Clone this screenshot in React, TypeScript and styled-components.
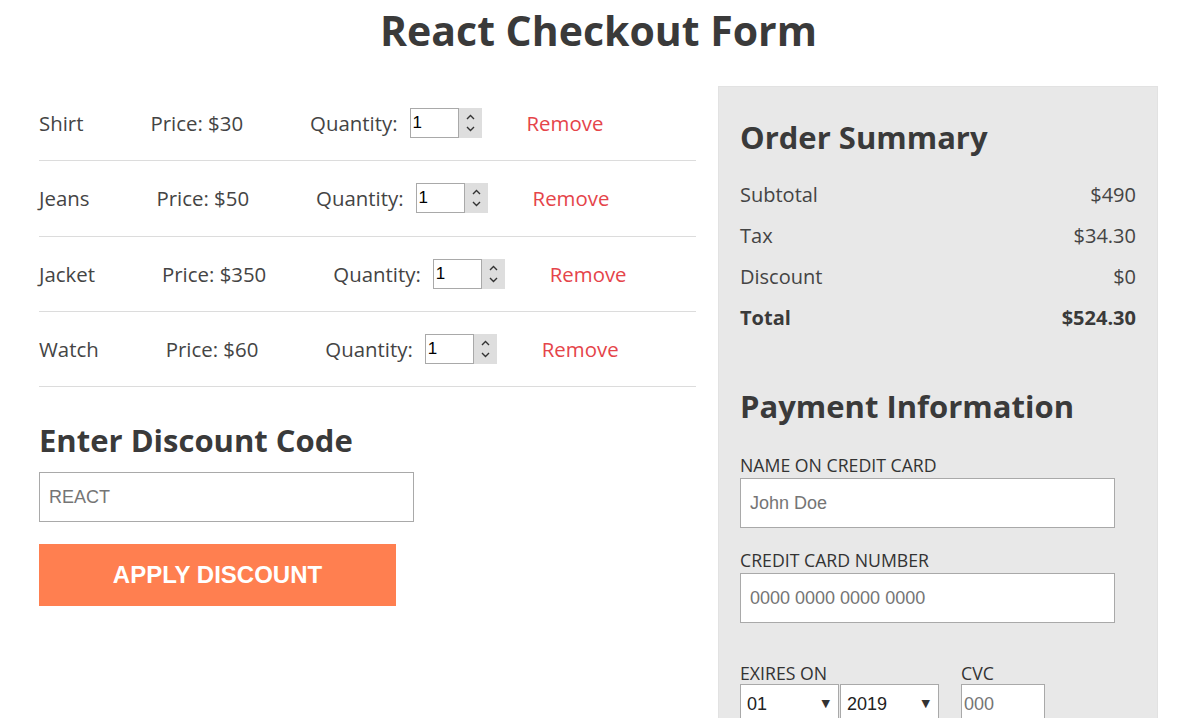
import React from "react";
import styled, { createGlobalStyle } from "styled-components";

const Global = createGlobalStyle`
  html, body { margin: 0; padding: 0; background: #fff; }
  body { font-family: "Open Sans", "Noto Sans", sans-serif; color: #3d3d3d; }
  * { box-sizing: border-box; }
`;

const Page = styled.div`
  padding: 0 39px;
`;

const Title = styled.h1`
  margin: 0;
  padding-top: 8px;
  height: 86px;
  text-align: center;
  font-size: 41px;
  line-height: 44px;
  font-weight: 700;
  color: #3a3a3a;
`;

const Columns = styled.div`
  display: grid;
  grid-template-columns: 657px 440px;
  column-gap: 22px;
  align-items: start;
`;

const LeftCol = styled.div`
  display: flex;
  flex-direction: column;
`;

const ItemRow = styled.div`
  display: flex;
  align-items: center;
  height: 75.34px;
  border-bottom: 1px solid #dcdcdc;
  font-size: 20.4px;
  color: #444;
`;

const Name = styled.span`
  margin-right: 67px;
`;

const Price = styled.span`
  margin-right: 67px;
`;

const QtyLabel = styled.span`
  margin-right: 12px;
`;

const QtyBox = styled.div`
  display: flex;
  height: 30px;
  margin-right: 45px;
`;

const QtyInput = styled.input`
  width: 49px;
  height: 30px;
  border: 1px solid #a9a9a9;
  padding: 0 2px;
  font-family: Arial, "Liberation Sans", sans-serif;
  font-size: 17px;
  color: #000;
  outline: none;
`;

const Spinner = styled.span`
  width: 23px;
  height: 30px;
  background: #dedede;
  display: flex;
  align-items: center;
  justify-content: center;
`;

const RemoveLink = styled.span`
  color: #e5444a;
  cursor: pointer;
`;

const SectionHeading = styled.h2<{ $top: number }>`
  margin: ${(p) => p.$top}px 0 0;
  font-size: 31px;
  line-height: 40px;
  font-weight: 700;
  color: #3a3a3a;
`;

const TextInput = styled.input<{ $w: number }>`
  display: block;
  width: ${(p) => p.$w}px;
  height: 50px;
  border: 1px solid #a9a9a9;
  background: #fff;
  padding: 0 9px;
  font-family: Arial, "Liberation Sans", sans-serif;
  font-size: 18px;
  color: #333;
  outline: none;
  &::placeholder { color: #757575; }
`;

const DiscountInput = styled(TextInput)`
  margin-top: 12px;
`;

const ApplyButton = styled.button`
  margin-top: 22px;
  width: 357px;
  height: 62px;
  border: none;
  background: #ff7f50;
  color: #fff;
  font-family: Arial, "Liberation Sans", sans-serif;
  font-weight: 700;
  font-size: 24px;
  cursor: pointer;
`;

const Panel = styled.aside`
  background: #e8e8e8;
  border: 1px solid #e2e2e2;
  padding: 30px 21px 60px;
  min-height: 700px;
`;

const SummaryList = styled.div`
  margin-top: 17px;
  display: flex;
  flex-direction: column;
`;

const SummaryRow = styled.div<{ $bold?: boolean }>`
  display: flex;
  justify-content: space-between;
  height: 41px;
  align-items: center;
  font-size: 20px;
  font-weight: ${(p) => (p.$bold ? 700 : 400)};
  color: ${(p) => (p.$bold ? "#3a3a3a" : "#444")};
`;

const Field = styled.div<{ $top: number }>`
  margin-top: ${(p) => p.$top}px;
  display: flex;
  flex-direction: column;
`;

const Label = styled.label`
  display: block;
  font-size: 17.7px;
  line-height: 22px;
  margin-bottom: 2px;
  text-transform: uppercase;
  color: #333;
`;

const ExpiryRow = styled.div`
  margin-top: 39px;
  display: flex;
  gap: 22px;
`;

const ExpiryLabel = styled(Label)`
  margin-bottom: 0;
`;

const SelectGroup = styled.div`
  display: flex;
  gap: 1px;
`;

const SelectWrap = styled.div`
  position: relative;
  width: 99px;
  height: 40px;
`;

const Select = styled.select`
  appearance: none;
  -webkit-appearance: none;
  width: 100%;
  height: 100%;
  border: 1px solid #a9a9a9;
  border-radius: 0;
  background: #fff;
  padding: 0 6px;
  font-family: Arial, "Liberation Sans", sans-serif;
  font-size: 18px;
  color: #222;
  outline: none;
`;

const Arrow = styled.span`
  position: absolute;
  right: 9px;
  top: 13px;
  font-size: 11px;
  color: #333;
  pointer-events: none;
  font-family: "DejaVu Sans", sans-serif;
`;

const CvcInput = styled.input`
  width: 84px;
  height: 40px;
  border: 1px solid #a9a9a9;
  background: #fff;
  padding: 0 2px;
  font-family: Arial, "Liberation Sans", sans-serif;
  font-size: 18px;
  outline: none;
  &::placeholder { color: #757575; }
`;

const SpinIcon = () => (
  <svg width="11" height="22" viewBox="0 0 11 22" fill="none" stroke="#333" strokeWidth="1.4">
    <polyline points="2,7 5.5,3.5 9,7" />
    <polyline points="2,15 5.5,18.5 9,15" />
  </svg>
);

const items = [
  { name: "Shirt", price: 30 },
  { name: "Jeans", price: 50 },
  { name: "Jacket", price: 350 },
  { name: "Watch", price: 60 },
];

export default function App() {
  return (
    <>
      <Global />
      <Page>
        <Title>React Checkout Form</Title>
        <Columns>
          <LeftCol>
            {items.map((it) => (
              <ItemRow key={it.name}>
                <Name>{it.name}</Name>
                <Price>Price: ${it.price}</Price>
                <QtyLabel>Quantity:</QtyLabel>
                <QtyBox>
                  <QtyInput defaultValue="1" />
                  <Spinner>
                    <SpinIcon />
                  </Spinner>
                </QtyBox>
                <RemoveLink>Remove</RemoveLink>
              </ItemRow>
            ))}
            <SectionHeading $top={33}>Enter Discount Code</SectionHeading>
            <DiscountInput $w={375} placeholder="REACT" />
            <ApplyButton>APPLY DISCOUNT</ApplyButton>
          </LeftCol>
          <Panel>
            <SectionHeading $top={0}>Order Summary</SectionHeading>
            <SummaryList>
              <SummaryRow>
                <span>Subtotal</span>
                <span>$490</span>
              </SummaryRow>
              <SummaryRow>
                <span>Tax</span>
                <span>$34.30</span>
              </SummaryRow>
              <SummaryRow>
                <span>Discount</span>
                <span>$0</span>
              </SummaryRow>
              <SummaryRow $bold>
                <span>Total</span>
                <span>$524.30</span>
              </SummaryRow>
            </SummaryList>
            <SectionHeading $top={48}>Payment Information</SectionHeading>
            <Field $top={28}>
              <Label>Name on credit card</Label>
              <TextInput $w={375} placeholder="John Doe" />
            </Field>
            <Field $top={21}>
              <Label>Credit card number</Label>
              <TextInput $w={375} placeholder="0000 0000 0000 0000" />
            </Field>
            <ExpiryRow>
              <div>
                <ExpiryLabel>Exires on</ExpiryLabel>
                <SelectGroup>
                  <SelectWrap>
                    <Select defaultValue="01">
                      {Array.from({ length: 12 }, (_, i) => String(i + 1).padStart(2, "0")).map((m) => (
                        <option key={m}>{m}</option>
                      ))}
                    </Select>
                    <Arrow>▼</Arrow>
                  </SelectWrap>
                  <SelectWrap>
                    <Select defaultValue="2019">
                      {["2019", "2020", "2021", "2022", "2023"].map((y) => (
                        <option key={y}>{y}</option>
                      ))}
                    </Select>
                    <Arrow>▼</Arrow>
                  </SelectWrap>
                </SelectGroup>
              </div>
              <div>
                <ExpiryLabel>CVC</ExpiryLabel>
                <CvcInput placeholder="000" />
              </div>
            </ExpiryRow>
          </Panel>
        </Columns>
      </Page>
    </>
  );
}
